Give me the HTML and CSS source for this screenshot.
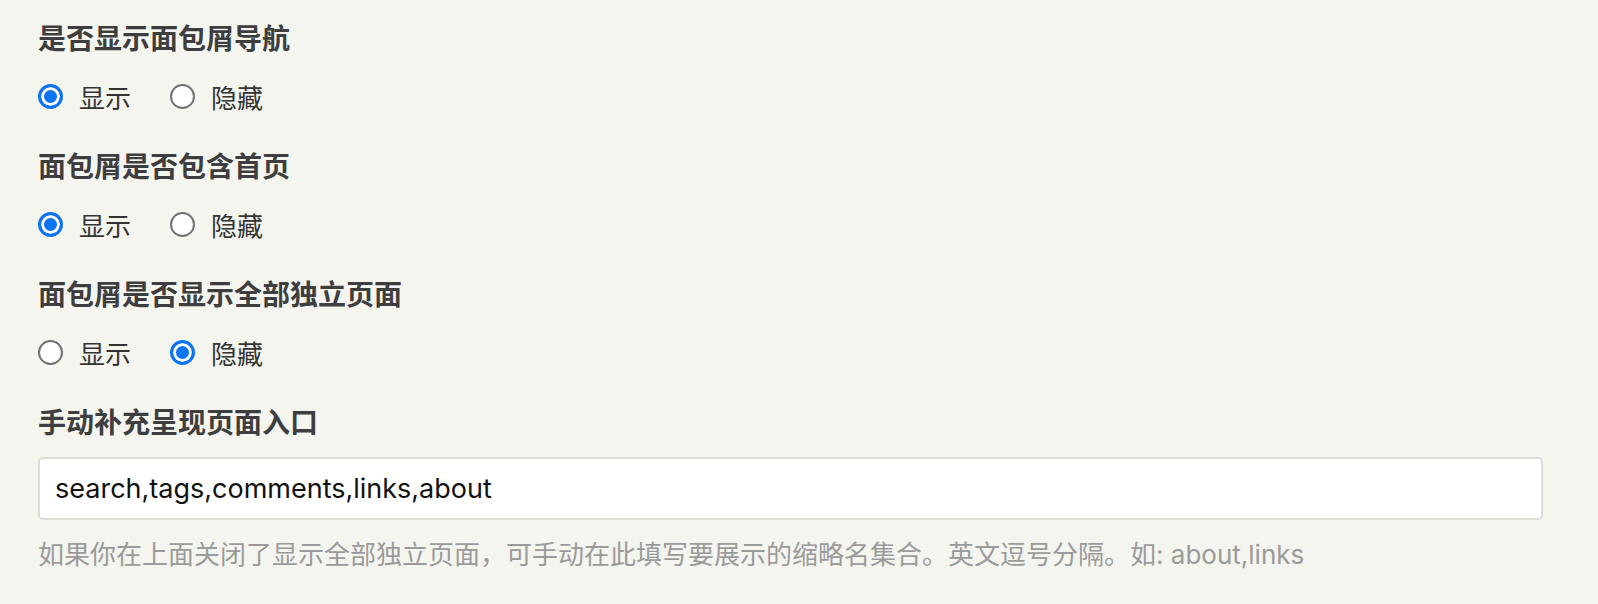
FILE: index.html
```html
<!DOCTYPE html>
<html lang="zh-CN">
<head>
    <meta charset="UTF-8">
    <meta name="viewport" content="width=device-width, initial-scale=1.0">
    <title>面包屑设置</title>
    <link rel="stylesheet" href="styles.css">
</head>
<body>
    <form class="settings">
        <div class="field">
            <h3>是否显示面包屑导航</h3>
            <div class="options">
                <label class="radio"><input type="radio" name="showCrumb" checked> 显示</label>
                <label class="radio"><input type="radio" name="showCrumb"> 隐藏</label>
            </div>
        </div>

        <div class="field">
            <h3>面包屑是否包含首页</h3>
            <div class="options">
                <label class="radio"><input type="radio" name="crumbHome" checked> 显示</label>
                <label class="radio"><input type="radio" name="crumbHome"> 隐藏</label>
            </div>
        </div>

        <div class="field">
            <h3>面包屑是否显示全部独立页面</h3>
            <div class="options">
                <label class="radio"><input type="radio" name="crumbPages"> 显示</label>
                <label class="radio"><input type="radio" name="crumbPages" checked> 隐藏</label>
            </div>
        </div>

        <div class="field">
            <h3>手动补充呈现页面入口</h3>
            <input class="text-input" type="text" value="search,tags,comments,links,about">
            <p class="hint">如果你在上面关闭了显示全部独立页面，可手动在此填写要展示的缩略名集合。英文逗号分隔。如: about,links</p>
        </div>
    </form>
</body>
</html>
```

FILE: styles.css
```css
/* Basic styling */
* { box-sizing: border-box; margin: 0; padding: 0; }
body { font-family: Inter, "Noto Sans CJK SC", sans-serif; background-color: #f5f5f0; color: #333; }
.settings { padding: 19px 55px 0 38px; }
.field { margin-bottom: 31px; }
.field h3 { font-size: 28px; line-height: 40px; font-weight: 700; color: #3e3e3e; margin-bottom: 17px; }
.field h3 + .text-input { margin-top: -3px; }
.options { display: flex; align-items: center; height: 40px; }
.radio { display: inline-flex; align-items: center; gap: 16px; margin-right: 39px; font-size: 26px; color: #333; cursor: pointer; }
.radio input { appearance: none; -webkit-appearance: none; width: 25px; height: 25px; border: 2px solid #707070; border-radius: 50%; background: #fff; margin: 0; }
.radio input:checked { border: 3px solid #0a74f5; background: #0a74f5; box-shadow: inset 0 0 0 3px #fff; }
.text-input { display: block; width: 100%; height: 63px; padding: 0 15px; font-family: Inter, "Noto Sans CJK SC", sans-serif; font-size: 27px; color: #111; background: #fff; border: 2px solid #dcdcd7; border-radius: 5px; outline: none; }
.hint { margin-top: 17px; font-size: 26px; line-height: 36px; color: #9a9a9a; }
```
